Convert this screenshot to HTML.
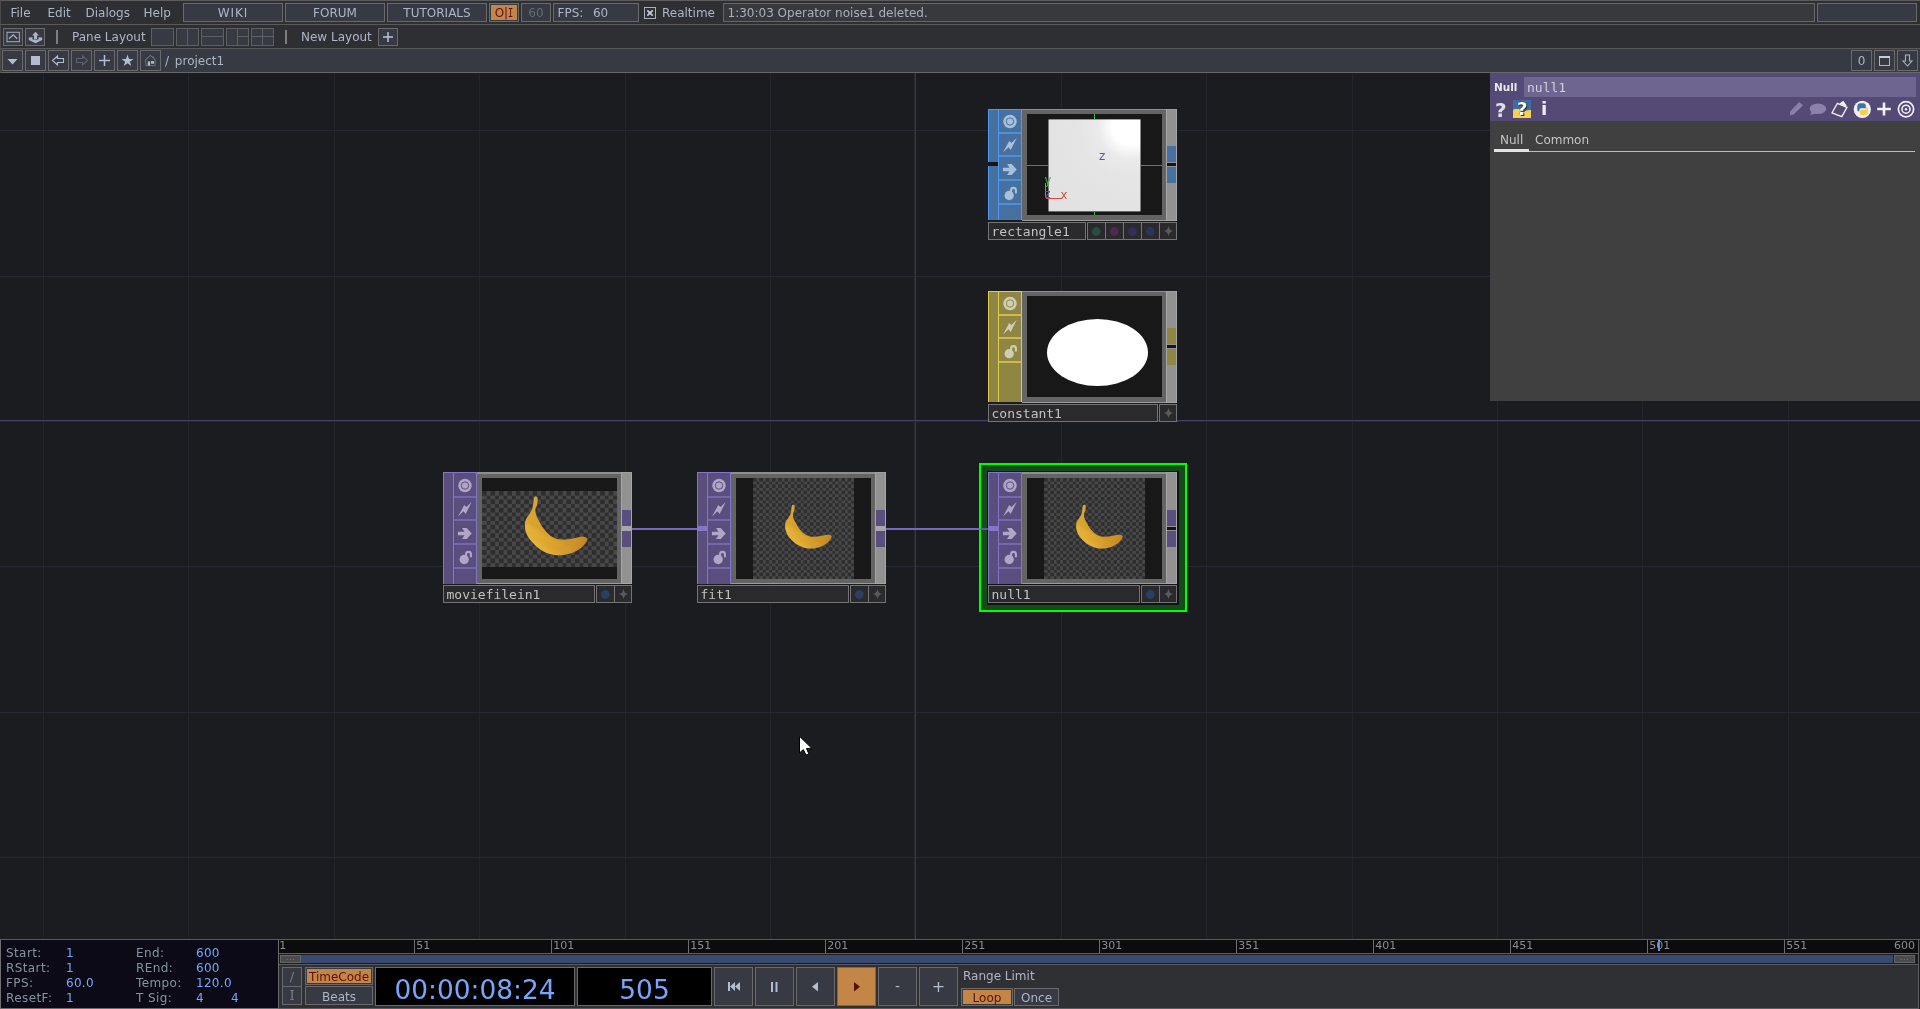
<!DOCTYPE html>
<html lang="en">
<head>
<meta charset="utf-8">
<title>TouchDesigner - project1</title>
<style>
*{box-sizing:border-box;margin:0;padding:0}
html,body{width:1920px;height:1009px;overflow:hidden;background:#1b1c20}
body{position:relative;font-family:"DejaVu Sans","Liberation Sans",sans-serif;font-size:12px;color:#adb5c6;line-height:1}
#app{position:absolute;left:0;top:0;width:1920px;height:1009px;overflow:hidden;will-change:transform}
#app div,#app span,#app svg,#app i,#app b{position:absolute}
.t{white-space:nowrap;line-height:14px;height:14px}
/* ---------- top bars ---------- */
#row1{left:0;top:0;width:1920px;height:25px;background:#2e2f32;border-top:1px solid #5c5c5e;border-bottom:1px solid #5a5a5c;border-left:1px solid #4a4a4c}
#row2{left:0;top:25px;width:1920px;height:24px;background:#2e2f32;border-bottom:1px solid #5a5a5c;border-left:1px solid #4a4a4c}
#row3{left:0;top:49px;width:1920px;height:24px;background:#373943;border-bottom:1px solid #66676b;border-left:1px solid #4a4a4c}
.btn{border:1px solid #6a6a6c;background:#373943}
.lay{border:1px solid #5f6064;background:#373943}
.tb{text-align:center;line-height:18px;white-space:nowrap}
/* ---------- network ---------- */
#net{left:0;top:73px;width:1920px;height:866px;background:#1b1c20;overflow:hidden}
.gv{top:0;width:1px;height:866px;background:#23242c}
.gh{left:0;height:1px;width:1920px;background:#262834}

.node{width:189px;height:131px;--f:#5a4e7e;--b:#8475c8;--s:#7568aa;--i:#b0a6c8}
.node .in{left:0;top:0;width:11px;height:112px;background:var(--f);border:1px solid var(--b);border-right:0;border-bottom:0}
.node .fl{left:10px;top:0;width:24px;height:112px;background:var(--f);border-left:1px solid var(--b);border-right:1px solid var(--b);border-top:1px solid var(--b)}
.node .fl i{left:0;width:22px;height:2px;background:var(--s)}
.node .fl svg{left:0;top:0}
.node .fr{left:34px;top:0;width:144px;height:112px;background:#646464;border-top:2px solid #8e8e8e;border-bottom:1px solid #9a9a9a}
.node .vw{left:5px;top:4px;width:135px;height:101px;background:#181819;overflow:hidden}
.node .ou{left:178px;top:0;width:11px;height:112px;background:#929292;border-left:1px solid #a6a6a6;border-right:1px solid #a6a6a6;border-top:1px solid #a0a0a0;border-bottom:1px solid #a6a6a6}
.node .ou i{left:0;width:9px;background:var(--f)}
.node .lb{top:113px;height:18px;background:#2a2a2c;border:1px solid #747476}
.node .nm{left:2.5px;top:1px;font-family:"DejaVu Sans Mono","Liberation Mono",monospace;font-size:13px;line-height:15px;color:#c2c2c2;white-space:nowrap}
.node.c1 .fr{border-top-width:1px}
.node.c1 .fl{height:111px}.node.c1 .fl svg{top:-1px}.node.c1 .fl i{margin-top:-1px}
.node.c1 .in{height:111px}.node.c1 .in i{margin-top:-1px}
.node.c1 .ou i{margin-top:-1px}
.chk{background-color:#2e2e2e;background-image:conic-gradient(#484848 25%,#2e2e2e 0 50%,#484848 0 75%,#2e2e2e 0);background-size:8.44px 8.44px}

/* ---------- param panel ---------- */
#par{left:1490px;top:73px;width:430px;height:328px;background:#404040}
#parh{left:0;top:0;width:430px;height:48px;background:#544a75}
/* ---------- bottom ---------- */
#bot{left:0;top:939px;width:1920px;height:70px;background:#2f3033;border-top:1px solid #5a5a5c}
</style>
</head>
<body>
<div id="app">

<!-- ================= NETWORK ================= -->
<div id="net">
  <i class="gv" style="left:43px"></i><i class="gv" style="left:188px"></i><i class="gv" style="left:334px"></i><i class="gv" style="left:479px"></i><i class="gv" style="left:625px"></i><i class="gv" style="left:770px"></i><i class="gv" style="left:1061px"></i><i class="gv" style="left:1206px"></i><i class="gv" style="left:1352px"></i><i class="gv" style="left:1497px"></i><i class="gv" style="left:1642px"></i><i class="gv" style="left:1788px"></i><i class="gh" style="top:57px"></i><i class="gh" style="top:203px"></i><i class="gh" style="top:493px"></i><i class="gh" style="top:639px"></i><i class="gh" style="top:784px"></i><i class="gv" style="left:915px;background:#363658"></i><i class="gv" style="left:914px;background:#27272f"></i><i class="gh" style="top:347px;background:#3f3f69"></i><i class="gh" style="top:348px;background:#262838"></i>
  <i style="left:632px;top:454.5px;width:65px;height:2px;background:#7767c0"></i><i style="left:886px;top:454.5px;width:102px;height:2px;background:#7767c0"></i>
  <svg width="0" height="0" style="left:0;top:0"><defs>
    <linearGradient id="bg" gradientUnits="userSpaceOnUse" x1="43" y1="40" x2="105" y2="66"><stop offset="0" stop-color="#e8b83e"/><stop offset="0.5" stop-color="#dca42c"/><stop offset="0.85" stop-color="#cf9430"/><stop offset="1" stop-color="#b27a2a"/></linearGradient>
    <linearGradient id="bg2" gradientUnits="userSpaceOnUse" x1="60" y1="52" x2="52" y2="66"><stop offset="0" stop-color="#c8901f" stop-opacity="0.45"/><stop offset="0.45" stop-color="#e0ac34" stop-opacity="0"/><stop offset="1" stop-color="#f0c850" stop-opacity="0.35"/></linearGradient>
  </defs></svg>
  <div class="node c1" style="left:988px;top:36px;--f:#4670a0;--b:#4f9af0;--s:#4f90d8;--i:#a9c0dc"><div class="in"><i style="left:-1px;top:53px;width:11px;height:4px;background:#151518"></i></div><div class="fl"><i style="top:23.4px"></i><i style="top:46.0px"></i><i style="top:70.0px"></i><i style="top:94.2px"></i><svg width="22" height="111" viewBox="0 0 22 111"><circle cx="11" cy="12.5" r="6.7" fill="var(--i)"/><circle cx="11" cy="12.5" r="3.7" fill="none" stroke="var(--f)" stroke-width="1"/><path d="M17.7 29.0 L12.4 34.0 L10.2 32.1 L4.0 43.5 L9.5 38.3 L11.7 40.9 Z" fill="var(--i)"/><path d="M3.9 58.7 L10.5 58.7 L8.0 55.0 L12.7 55.0 L17.7 60.4 L12.7 65.9 L8.0 65.9 L10.5 62.2 L3.9 62.2 Z" fill="var(--i)"/><circle cx="10.2" cy="86.5" r="4.65" fill="var(--i)"/><path d="M12.1 82.5 V81.3 A2.4 2.4 0 0 1 16.9 81.3 V83.5" fill="none" stroke="var(--i)" stroke-width="2.1" stroke-linecap="round"/></svg></div><div class="fr"><div class="vw"><div style="left:21px;top:5px;width:92px;height:92px;transform:translate(.5px,.4px);background:radial-gradient(circle 117px at 90% 7%,#fff 0,#fff 16%,#f5f5f5 22%,#eaeaea 29%,#e5e5e5 45%,#e1e1e1 100%)"></div>
<i style="left:0;top:50.5px;width:21px;height:1px;background:#d04848"></i><i style="left:114px;top:50.5px;width:21px;height:1px;background:#d04848"></i>
<i style="left:67px;top:0;width:1px;height:5px;background:#48b848"></i><i style="left:67px;top:98px;width:1px;height:3px;background:#48b848"></i>
<i style="left:18px;top:69px;width:1px;height:15px;background:#48b848"></i><i style="left:18.5px;top:83.5px;width:16px;height:1px;background:#d04848"></i>
<span style="left:72px;top:36px;font-size:12px;line-height:13px;color:#5a52c8">z</span>
<span style="left:17.5px;top:60px;font-size:11.5px;line-height:12px;color:#48b848">y</span>
<span style="left:17.5px;top:74px;font-size:11.5px;line-height:12px;color:#5a52c8">z</span>
<span style="left:33.5px;top:74.5px;font-size:11.5px;line-height:12px;color:#d04848">x</span></div></div><div class="ou"><i style="top:37px;height:16px"></i><i style="top:58px;height:16px"></i><i style="top:54px;height:3px;background:#151518"></i></div><div class="lb" style="left:0;width:98px"><span class="nm">rectangle1</span></div><div class="lb" style="left:99px;width:19px"><svg width="17" height="16" viewBox="0 0 17 16" style="left:0;top:0"><circle cx="8.3" cy="8.5" r="4.4" fill="#274e40"/></svg></div><div class="lb" style="left:117px;width:19px"><svg width="17" height="16" viewBox="0 0 17 16" style="left:0;top:0"><circle cx="8.3" cy="8.5" r="4.4" fill="#4e2a4e"/></svg></div><div class="lb" style="left:135px;width:19px"><svg width="17" height="16" viewBox="0 0 17 16" style="left:0;top:0"><circle cx="8.3" cy="8.5" r="4.4" fill="#332e5a"/></svg></div><div class="lb" style="left:153px;width:19px"><svg width="17" height="16" viewBox="0 0 17 16" style="left:0;top:0"><circle cx="8.3" cy="8.5" r="4.4" fill="#283658"/></svg></div><div class="lb" style="left:171px;width:18px"><svg width="17" height="16" viewBox="0 0 17 16" style="left:0;top:0"><path d="M8.5 2.5 Q9 7.5 13.5 8 Q9 8.5 8.5 13.5 Q8 8.5 3.5 8 Q8 7.5 8.5 2.5Z" fill="#5a5a5c"/></svg></div></div>
  <div class="node c1" style="left:988px;top:218px;--f:#8f8644;--b:#e2cc4e;--s:#cdb94c;--i:#cfcdb4"><div class="in"></div><div class="fl"><i style="top:23.4px"></i><i style="top:46.0px"></i><i style="top:70.0px"></i><svg width="22" height="111" viewBox="0 0 22 111"><circle cx="11" cy="12.5" r="6.7" fill="var(--i)"/><circle cx="11" cy="12.5" r="3.7" fill="none" stroke="var(--f)" stroke-width="1"/><path d="M17.7 29.0 L12.4 34.0 L10.2 32.1 L4.0 43.5 L9.5 38.3 L11.7 40.9 Z" fill="var(--i)"/><circle cx="10.2" cy="62.7" r="4.65" fill="var(--i)"/><path d="M12.1 58.7 V57.5 A2.4 2.4 0 0 1 16.9 57.5 V59.7" fill="none" stroke="var(--i)" stroke-width="2.1" stroke-linecap="round"/></svg></div><div class="fr"><div class="vw"><div style="left:19.5px;top:23px;width:101px;height:67px;border-radius:50%;background:#fff"></div></div></div><div class="ou"><i style="top:37px;height:16px"></i><i style="top:58px;height:16px"></i><i style="top:54px;height:3px;background:#151518"></i></div><div class="lb" style="left:0;width:170px"><span class="nm">constant1</span></div><div class="lb" style="left:171px;width:18px"><svg width="17" height="16" viewBox="0 0 17 16" style="left:0;top:0"><path d="M8.5 2.5 Q9 7.5 13.5 8 Q9 8.5 8.5 13.5 Q8 8.5 3.5 8 Q8 7.5 8.5 2.5Z" fill="#5a5a5c"/></svg></div></div>
  <div class="node" style="left:443px;top:399px"><div class="in"></div><div class="fl"><i style="top:23.4px"></i><i style="top:46.0px"></i><i style="top:70.0px"></i><i style="top:94.2px"></i><svg width="22" height="111" viewBox="0 0 22 111"><circle cx="11" cy="12.5" r="6.7" fill="var(--i)"/><circle cx="11" cy="12.5" r="3.7" fill="none" stroke="var(--f)" stroke-width="1"/><path d="M17.7 29.0 L12.4 34.0 L10.2 32.1 L4.0 43.5 L9.5 38.3 L11.7 40.9 Z" fill="var(--i)"/><path d="M3.9 58.7 L10.5 58.7 L8.0 55.0 L12.7 55.0 L17.7 60.4 L12.7 65.9 L8.0 65.9 L10.5 62.2 L3.9 62.2 Z" fill="var(--i)"/><circle cx="10.2" cy="86.5" r="4.65" fill="var(--i)"/><path d="M12.1 82.5 V81.3 A2.4 2.4 0 0 1 16.9 81.3 V83.5" fill="none" stroke="var(--i)" stroke-width="2.1" stroke-linecap="round"/></svg></div><div class="fr"><div class="vw"><div class="chk" style="left:0;top:12.5px;width:135px;height:76px"></div><svg width="135" height="101" viewBox="0 0 135 101" style="left:0;top:0"><g><path d="M52.3 19.5C51.7 20.7 51.6 24.3 51.2 26.3C50.8 28.2 50.8 29.6 50.1 31.3C49.5 32.9 48.3 34.6 47.3 36.3C46.3 37.9 44.8 39.6 44.1 41.3C43.3 42.9 43.1 44.5 43.0 46.3C42.9 48.0 42.9 49.9 43.3 52.0C43.8 54.0 44.6 56.2 45.8 58.4C47.1 60.5 48.8 62.7 50.8 64.8C52.9 67.0 55.4 69.5 58.0 71.2C60.6 73.0 63.6 74.5 66.5 75.5C69.5 76.5 72.8 77.1 75.8 77.3C78.8 77.5 81.6 77.1 84.4 76.6C87.1 76.1 89.9 75.2 92.2 74.1C94.6 73.0 96.8 71.6 98.7 70.2C100.5 68.7 102.2 66.9 103.3 65.5C104.4 64.2 104.9 62.9 105.1 62.0C105.3 61.0 105.2 60.4 104.4 59.8C103.5 59.3 101.8 58.7 100.1 58.7C98.4 58.7 96.5 59.4 94.4 59.8C92.2 60.2 89.7 60.9 87.2 61.2C84.7 61.5 81.8 61.8 79.4 61.6C77.0 61.4 75.1 61.1 73.0 60.2C70.8 59.3 68.4 57.9 66.5 56.2C64.6 54.6 63.1 52.7 61.5 50.5C60.0 48.4 58.5 45.7 57.3 43.4C56.0 41.1 54.7 39.0 54.1 37.0C53.4 35.0 53.2 33.1 53.3 31.3C53.5 29.5 54.8 28.1 55.1 26.3C55.5 24.5 55.6 21.8 55.5 20.6C55.4 19.3 54.9 19.0 54.4 18.8C53.9 18.6 52.8 18.2 52.3 19.5Z" fill="url(#bg)"/><path d="M52.3 19.5C51.7 20.7 51.6 24.3 51.2 26.3C50.8 28.2 50.8 29.6 50.1 31.3C49.5 32.9 48.3 34.6 47.3 36.3C46.3 37.9 44.8 39.6 44.1 41.3C43.3 42.9 43.1 44.5 43.0 46.3C42.9 48.0 42.9 49.9 43.3 52.0C43.8 54.0 44.6 56.2 45.8 58.4C47.1 60.5 48.8 62.7 50.8 64.8C52.9 67.0 55.4 69.5 58.0 71.2C60.6 73.0 63.6 74.5 66.5 75.5C69.5 76.5 72.8 77.1 75.8 77.3C78.8 77.5 81.6 77.1 84.4 76.6C87.1 76.1 89.9 75.2 92.2 74.1C94.6 73.0 96.8 71.6 98.7 70.2C100.5 68.7 102.2 66.9 103.3 65.5C104.4 64.2 104.9 62.9 105.1 62.0C105.3 61.0 105.2 60.4 104.4 59.8C103.5 59.3 101.8 58.7 100.1 58.7C98.4 58.7 96.5 59.4 94.4 59.8C92.2 60.2 89.7 60.9 87.2 61.2C84.7 61.5 81.8 61.8 79.4 61.6C77.0 61.4 75.1 61.1 73.0 60.2C70.8 59.3 68.4 57.9 66.5 56.2C64.6 54.6 63.1 52.7 61.5 50.5C60.0 48.4 58.5 45.7 57.3 43.4C56.0 41.1 54.7 39.0 54.1 37.0C53.4 35.0 53.2 33.1 53.3 31.3C53.5 29.5 54.8 28.1 55.1 26.3C55.5 24.5 55.6 21.8 55.5 20.6C55.4 19.3 54.9 19.0 54.4 18.8C53.9 18.6 52.8 18.2 52.3 19.5Z" fill="url(#bg2)"/></g></svg></div></div><div class="ou"><i style="top:37px;height:16px"></i><i style="top:58px;height:16px"></i><i style="top:53px;height:5px;background:#a8a8aa"></i></div><div class="lb" style="left:0;width:152px"><span class="nm">moviefilein1</span></div><div class="lb" style="left:153px;width:19px"><svg width="17" height="16" viewBox="0 0 17 16" style="left:0;top:0"><circle cx="8.3" cy="8.5" r="4.4" fill="#2c3e62"/></svg></div><div class="lb" style="left:171px;width:18px"><svg width="17" height="16" viewBox="0 0 17 16" style="left:0;top:0"><path d="M8.5 2.5 Q9 7.5 13.5 8 Q9 8.5 8.5 13.5 Q8 8.5 3.5 8 Q8 7.5 8.5 2.5Z" fill="#5a5a5c"/></svg></div></div>
  <div class="node" style="left:697px;top:399px"><div class="in"><i style="left:0;top:53px;width:10px;height:5px;background:var(--b)"></i></div><div class="fl"><i style="top:23.4px"></i><i style="top:46.0px"></i><i style="top:70.0px"></i><i style="top:94.2px"></i><svg width="22" height="111" viewBox="0 0 22 111"><circle cx="11" cy="12.5" r="6.7" fill="var(--i)"/><circle cx="11" cy="12.5" r="3.7" fill="none" stroke="var(--f)" stroke-width="1"/><path d="M17.7 29.0 L12.4 34.0 L10.2 32.1 L4.0 43.5 L9.5 38.3 L11.7 40.9 Z" fill="var(--i)"/><path d="M3.9 58.7 L10.5 58.7 L8.0 55.0 L12.7 55.0 L17.7 60.4 L12.7 65.9 L8.0 65.9 L10.5 62.2 L3.9 62.2 Z" fill="var(--i)"/><circle cx="10.2" cy="86.5" r="4.65" fill="var(--i)"/><path d="M12.1 82.5 V81.3 A2.4 2.4 0 0 1 16.9 81.3 V83.5" fill="none" stroke="var(--i)" stroke-width="2.1" stroke-linecap="round"/></svg></div><div class="fr"><div class="vw"><div class="chk" style="left:17px;top:0;width:101px;height:101px;background-size:6.3125px 6.3125px"></div><svg width="135" height="101" viewBox="0 0 135 101" style="left:0;top:0"><g transform="translate(67.5 50.5) scale(0.748) translate(-67.5 -50.5)"><path d="M52.3 19.5C51.7 20.7 51.6 24.3 51.2 26.3C50.8 28.2 50.8 29.6 50.1 31.3C49.5 32.9 48.3 34.6 47.3 36.3C46.3 37.9 44.8 39.6 44.1 41.3C43.3 42.9 43.1 44.5 43.0 46.3C42.9 48.0 42.9 49.9 43.3 52.0C43.8 54.0 44.6 56.2 45.8 58.4C47.1 60.5 48.8 62.7 50.8 64.8C52.9 67.0 55.4 69.5 58.0 71.2C60.6 73.0 63.6 74.5 66.5 75.5C69.5 76.5 72.8 77.1 75.8 77.3C78.8 77.5 81.6 77.1 84.4 76.6C87.1 76.1 89.9 75.2 92.2 74.1C94.6 73.0 96.8 71.6 98.7 70.2C100.5 68.7 102.2 66.9 103.3 65.5C104.4 64.2 104.9 62.9 105.1 62.0C105.3 61.0 105.2 60.4 104.4 59.8C103.5 59.3 101.8 58.7 100.1 58.7C98.4 58.7 96.5 59.4 94.4 59.8C92.2 60.2 89.7 60.9 87.2 61.2C84.7 61.5 81.8 61.8 79.4 61.6C77.0 61.4 75.1 61.1 73.0 60.2C70.8 59.3 68.4 57.9 66.5 56.2C64.6 54.6 63.1 52.7 61.5 50.5C60.0 48.4 58.5 45.7 57.3 43.4C56.0 41.1 54.7 39.0 54.1 37.0C53.4 35.0 53.2 33.1 53.3 31.3C53.5 29.5 54.8 28.1 55.1 26.3C55.5 24.5 55.6 21.8 55.5 20.6C55.4 19.3 54.9 19.0 54.4 18.8C53.9 18.6 52.8 18.2 52.3 19.5Z" fill="url(#bg)"/><path d="M52.3 19.5C51.7 20.7 51.6 24.3 51.2 26.3C50.8 28.2 50.8 29.6 50.1 31.3C49.5 32.9 48.3 34.6 47.3 36.3C46.3 37.9 44.8 39.6 44.1 41.3C43.3 42.9 43.1 44.5 43.0 46.3C42.9 48.0 42.9 49.9 43.3 52.0C43.8 54.0 44.6 56.2 45.8 58.4C47.1 60.5 48.8 62.7 50.8 64.8C52.9 67.0 55.4 69.5 58.0 71.2C60.6 73.0 63.6 74.5 66.5 75.5C69.5 76.5 72.8 77.1 75.8 77.3C78.8 77.5 81.6 77.1 84.4 76.6C87.1 76.1 89.9 75.2 92.2 74.1C94.6 73.0 96.8 71.6 98.7 70.2C100.5 68.7 102.2 66.9 103.3 65.5C104.4 64.2 104.9 62.9 105.1 62.0C105.3 61.0 105.2 60.4 104.4 59.8C103.5 59.3 101.8 58.7 100.1 58.7C98.4 58.7 96.5 59.4 94.4 59.8C92.2 60.2 89.7 60.9 87.2 61.2C84.7 61.5 81.8 61.8 79.4 61.6C77.0 61.4 75.1 61.1 73.0 60.2C70.8 59.3 68.4 57.9 66.5 56.2C64.6 54.6 63.1 52.7 61.5 50.5C60.0 48.4 58.5 45.7 57.3 43.4C56.0 41.1 54.7 39.0 54.1 37.0C53.4 35.0 53.2 33.1 53.3 31.3C53.5 29.5 54.8 28.1 55.1 26.3C55.5 24.5 55.6 21.8 55.5 20.6C55.4 19.3 54.9 19.0 54.4 18.8C53.9 18.6 52.8 18.2 52.3 19.5Z" fill="url(#bg2)"/></g></svg></div></div><div class="ou"><i style="top:37px;height:16px"></i><i style="top:58px;height:16px"></i><i style="top:53px;height:5px;background:#a8a8aa"></i></div><div class="lb" style="left:0;width:152px"><span class="nm">fit1</span></div><div class="lb" style="left:153px;width:19px"><svg width="17" height="16" viewBox="0 0 17 16" style="left:0;top:0"><circle cx="8.3" cy="8.5" r="4.4" fill="#2c3e62"/></svg></div><div class="lb" style="left:171px;width:18px"><svg width="17" height="16" viewBox="0 0 17 16" style="left:0;top:0"><path d="M8.5 2.5 Q9 7.5 13.5 8 Q9 8.5 8.5 13.5 Q8 8.5 3.5 8 Q8 7.5 8.5 2.5Z" fill="#5a5a5c"/></svg></div></div>
  <div style="left:979px;top:390px;width:208px;height:149px;background:#154a1b;border:2px solid #00ff00"><i style="left:6px;top:6px;width:192px;height:134px;background:#121214"></i></div>
  <i style="left:979px;top:454.5px;width:9px;height:2px;background:#7767c0;opacity:.75"></i>
  <div class="node" style="left:988px;top:399px"><div class="in"><i style="left:0;top:53px;width:10px;height:5px;background:var(--b)"></i></div><div class="fl"><i style="top:23.4px"></i><i style="top:46.0px"></i><i style="top:70.0px"></i><i style="top:94.2px"></i><svg width="22" height="111" viewBox="0 0 22 111"><circle cx="11" cy="12.5" r="6.7" fill="var(--i)"/><circle cx="11" cy="12.5" r="3.7" fill="none" stroke="var(--f)" stroke-width="1"/><path d="M17.7 29.0 L12.4 34.0 L10.2 32.1 L4.0 43.5 L9.5 38.3 L11.7 40.9 Z" fill="var(--i)"/><path d="M3.9 58.7 L10.5 58.7 L8.0 55.0 L12.7 55.0 L17.7 60.4 L12.7 65.9 L8.0 65.9 L10.5 62.2 L3.9 62.2 Z" fill="var(--i)"/><circle cx="10.2" cy="86.5" r="4.65" fill="var(--i)"/><path d="M12.1 82.5 V81.3 A2.4 2.4 0 0 1 16.9 81.3 V83.5" fill="none" stroke="var(--i)" stroke-width="2.1" stroke-linecap="round"/></svg></div><div class="fr"><div class="vw"><div class="chk" style="left:17px;top:0;width:101px;height:101px;background-size:6.3125px 6.3125px"></div><svg width="135" height="101" viewBox="0 0 135 101" style="left:0;top:0"><g transform="translate(67.5 50.5) scale(0.748) translate(-67.5 -50.5)"><path d="M52.3 19.5C51.7 20.7 51.6 24.3 51.2 26.3C50.8 28.2 50.8 29.6 50.1 31.3C49.5 32.9 48.3 34.6 47.3 36.3C46.3 37.9 44.8 39.6 44.1 41.3C43.3 42.9 43.1 44.5 43.0 46.3C42.9 48.0 42.9 49.9 43.3 52.0C43.8 54.0 44.6 56.2 45.8 58.4C47.1 60.5 48.8 62.7 50.8 64.8C52.9 67.0 55.4 69.5 58.0 71.2C60.6 73.0 63.6 74.5 66.5 75.5C69.5 76.5 72.8 77.1 75.8 77.3C78.8 77.5 81.6 77.1 84.4 76.6C87.1 76.1 89.9 75.2 92.2 74.1C94.6 73.0 96.8 71.6 98.7 70.2C100.5 68.7 102.2 66.9 103.3 65.5C104.4 64.2 104.9 62.9 105.1 62.0C105.3 61.0 105.2 60.4 104.4 59.8C103.5 59.3 101.8 58.7 100.1 58.7C98.4 58.7 96.5 59.4 94.4 59.8C92.2 60.2 89.7 60.9 87.2 61.2C84.7 61.5 81.8 61.8 79.4 61.6C77.0 61.4 75.1 61.1 73.0 60.2C70.8 59.3 68.4 57.9 66.5 56.2C64.6 54.6 63.1 52.7 61.5 50.5C60.0 48.4 58.5 45.7 57.3 43.4C56.0 41.1 54.7 39.0 54.1 37.0C53.4 35.0 53.2 33.1 53.3 31.3C53.5 29.5 54.8 28.1 55.1 26.3C55.5 24.5 55.6 21.8 55.5 20.6C55.4 19.3 54.9 19.0 54.4 18.8C53.9 18.6 52.8 18.2 52.3 19.5Z" fill="url(#bg)"/><path d="M52.3 19.5C51.7 20.7 51.6 24.3 51.2 26.3C50.8 28.2 50.8 29.6 50.1 31.3C49.5 32.9 48.3 34.6 47.3 36.3C46.3 37.9 44.8 39.6 44.1 41.3C43.3 42.9 43.1 44.5 43.0 46.3C42.9 48.0 42.9 49.9 43.3 52.0C43.8 54.0 44.6 56.2 45.8 58.4C47.1 60.5 48.8 62.7 50.8 64.8C52.9 67.0 55.4 69.5 58.0 71.2C60.6 73.0 63.6 74.5 66.5 75.5C69.5 76.5 72.8 77.1 75.8 77.3C78.8 77.5 81.6 77.1 84.4 76.6C87.1 76.1 89.9 75.2 92.2 74.1C94.6 73.0 96.8 71.6 98.7 70.2C100.5 68.7 102.2 66.9 103.3 65.5C104.4 64.2 104.9 62.9 105.1 62.0C105.3 61.0 105.2 60.4 104.4 59.8C103.5 59.3 101.8 58.7 100.1 58.7C98.4 58.7 96.5 59.4 94.4 59.8C92.2 60.2 89.7 60.9 87.2 61.2C84.7 61.5 81.8 61.8 79.4 61.6C77.0 61.4 75.1 61.1 73.0 60.2C70.8 59.3 68.4 57.9 66.5 56.2C64.6 54.6 63.1 52.7 61.5 50.5C60.0 48.4 58.5 45.7 57.3 43.4C56.0 41.1 54.7 39.0 54.1 37.0C53.4 35.0 53.2 33.1 53.3 31.3C53.5 29.5 54.8 28.1 55.1 26.3C55.5 24.5 55.6 21.8 55.5 20.6C55.4 19.3 54.9 19.0 54.4 18.8C53.9 18.6 52.8 18.2 52.3 19.5Z" fill="url(#bg2)"/></g></svg></div></div><div class="ou"><i style="top:37px;height:16px"></i><i style="top:58px;height:16px"></i><i style="top:54px;height:3px;background:#151518"></i></div><div class="lb" style="left:0;width:152px"><span class="nm">null1</span></div><div class="lb" style="left:153px;width:19px"><svg width="17" height="16" viewBox="0 0 17 16" style="left:0;top:0"><circle cx="8.3" cy="8.5" r="4.4" fill="#2c3e62"/></svg></div><div class="lb" style="left:171px;width:18px"><svg width="17" height="16" viewBox="0 0 17 16" style="left:0;top:0"><path d="M8.5 2.5 Q9 7.5 13.5 8 Q9 8.5 8.5 13.5 Q8 8.5 3.5 8 Q8 7.5 8.5 2.5Z" fill="#5a5a5c"/></svg></div></div>
</div>

<!-- ================= TOP BARS ================= -->
<div id="row1">

  <span class="t" style="left:9.5px;top:5px">File</span>
  <span class="t" style="left:46.5px;top:5px">Edit</span>
  <span class="t" style="left:84.5px;top:5px">Dialogs</span>
  <span class="t" style="left:142.5px;top:5px">Help</span>
  <div class="btn tb" style="left:182px;top:2px;width:100px;height:19px;letter-spacing:.9px">WIKI</div>
  <div class="btn tb" style="left:284px;top:2px;width:100px;height:19px">FORUM</div>
  <div class="btn tb" style="left:386px;top:2px;width:100px;height:19px">TUTORIALS</div>
  <div class="btn" style="left:488px;top:2px;width:30px;height:19px"><div class="tb" style="left:1px;top:1px;width:26px;height:15px;background:#c48647;color:#5a1010;line-height:17px">O|<span style="position:static;display:inline-block;transform:scaleX(.72);margin:0 -1px;font-family:'DejaVu Sans Mono','Liberation Mono',monospace;font-size:12px">I</span></div></div>
  <div class="btn tb" style="left:520px;top:2px;width:30px;height:19px;color:#686a72">60</div>
  <div class="btn" style="left:552px;top:2px;width:86px;height:19px"><span class="t" style="left:3.5px;top:2px;white-space:pre;word-spacing:1px">FPS:  60</span></div>
  <div style="left:643px;top:6px;width:12px;height:12px;border:1px solid #a9b0bd;background:#2e2f32"><svg width="10" height="10" viewBox="0 0 10 10" style="left:0;top:0"><path d="M2.3 2.3 L7.7 7.7 M7.7 2.3 L2.3 7.7" stroke="#c4cbd8" stroke-width="1.8" fill="none"/></svg></div>
  <span class="t" style="left:661px;top:5px">Realtime</span>
  <div style="left:722px;top:2px;width:1092px;height:19px;border:1px solid #66676a;background:#38393d"><span class="t" style="left:3.5px;top:2px;color:#a9afbc">1:30:03 Operator noise1 deleted.</span></div>
  <div class="btn" style="left:1816px;top:2px;width:100px;height:19px"></div>
</div>
<div id="row2">

  <div class="btn" style="left:2px;top:3px;width:20px;height:18px"><svg width="19" height="17" viewBox="0 0 19 17" style="left:0;top:0"><rect x="3" y="3.3" width="12.4" height="9.4" fill="none" stroke="#9aa4b7" stroke-width="1.1"/><path d="M5 9.8 L9.2 5.8 L13.2 9.8" fill="none" stroke="#a9b3c6" stroke-width="1.3"/></svg></div>
  <div class="btn" style="left:24px;top:3px;width:20px;height:18px"><svg width="19" height="17" viewBox="0 0 19 17" style="left:0;top:0"><path d="M9.5 2.7 L13 6.5 L11 6.5 L11 10 L8 10 L8 6.5 L6 6.5 Z" fill="#a9b3c6"/><path d="M2.8 8.6 L6.5 8.2 L6.5 10.6 L12.5 10.6 L12.5 8.2 L16.2 8.6 L16.2 11 L9.5 14.2 L2.8 11 Z" fill="#a9b3c6"/></svg></div>
  <i style="left:55px;top:5px;width:2px;height:14px;background:#7d7e82"></i>
  <span class="t" style="left:71px;top:5px">Pane Layout</span>
  <div class="lay" style="left:150px;top:3px;width:23px;height:18px"></div>
  <div class="lay" style="left:175px;top:3px;width:23px;height:18px"><i style="left:10px;top:0;width:1px;height:16px;background:#5f6064"></i></div>
  <div class="lay" style="left:200px;top:3px;width:23px;height:18px"><i style="left:0;top:7px;width:21px;height:1px;background:#5f6064"></i></div>
  <div class="lay" style="left:225px;top:3px;width:23px;height:18px"><i style="left:10px;top:0;width:1px;height:16px;background:#5f6064"></i><i style="left:10px;top:7px;width:11px;height:1px;background:#5f6064"></i></div>
  <div class="lay" style="left:250px;top:3px;width:23px;height:18px"><i style="left:10px;top:0;width:1px;height:16px;background:#5f6064"></i><i style="left:0;top:7px;width:21px;height:1px;background:#5f6064"></i></div>

  <i style="left:284px;top:5px;width:2px;height:14px;background:#7d7e82"></i>
  <span class="t" style="left:300px;top:5px">New Layout</span>
  <div class="btn" style="left:377px;top:3px;width:20px;height:18px"><svg width="18" height="16" viewBox="0 0 18 16" style="left:0;top:0"><path d="M9 3 V13 M4 8 H14" stroke="#c0c8d6" stroke-width="1.4" fill="none"/></svg></div>
</div>
<div id="row3">

  <div class="btn" style="left:1px;top:1px;width:21px;height:21px"><svg width="19" height="19" viewBox="0 0 19 19" style="left:0;top:0"><path d="M4.5 8 L14.5 8 L9.5 13.5 Z" fill="#b3bdd0"/></svg></div>
  <div class="btn" style="left:24px;top:1px;width:21px;height:21px"><svg width="19" height="19" viewBox="0 0 19 19" style="left:0;top:0"><rect x="5" y="5" width="9" height="9" fill="#b3bdd0"/></svg></div>
  <div class="btn" style="left:47px;top:1px;width:21px;height:21px"><svg width="19" height="19" viewBox="0 0 19 19" style="left:0;top:0"><path d="M3.5 9.5 L8.5 5 L8.5 7.5 L14.5 7.5 L14.5 11.5 L8.5 11.5 L8.5 14 Z" fill="none" stroke="#b3bdd0" stroke-width="1.1"/></svg></div>
  <div class="btn" style="left:70px;top:1px;width:21px;height:21px"><svg width="19" height="19" viewBox="0 0 19 19" style="left:0;top:0"><path d="M15.5 9.5 L10.5 5 L10.5 7.5 L4.5 7.5 L4.5 11.5 L10.5 11.5 L10.5 14 Z" fill="none" stroke="#5f6270" stroke-width="1.1"/></svg></div>
  <div class="btn" style="left:93px;top:1px;width:21px;height:21px"><svg width="19" height="19" viewBox="0 0 19 19" style="left:0;top:0"><path d="M9.5 4 V15 M4 9.5 H15" stroke="#b3bdd0" stroke-width="1.5" fill="none"/></svg></div>
  <div class="btn" style="left:116px;top:1px;width:21px;height:21px"><svg width="19" height="19" viewBox="0 0 19 19" style="left:0;top:0"><path d="M9.5 3.5 L11 8 L15.5 8 L11.9 10.7 L13.3 15 L9.5 12.3 L5.7 15 L7.1 10.7 L3.5 8 L8 8 Z" fill="#b3bdd0"/></svg></div>
  <div class="btn" style="left:139px;top:1px;width:21px;height:21px"><svg width="19" height="19" viewBox="0 0 19 19" style="left:0;top:0"><path d="M3.7 9.7 L9.45 4.3 L15.1 9.7" fill="none" stroke="#7f8696" stroke-width="1"/><path d="M11.6 5.2 V6.4 L12.8 7.4 V5.2Z" fill="#6f7586"/><path d="M4.8 9.5 V14.6 H14.2 V9.5" fill="none" stroke="#6f7586" stroke-width="0.9"/><rect x="6.8" y="10.4" width="2.2" height="4.2" fill="#b3bdd0"/><rect x="9.9" y="10.1" width="3.2" height="2.6" fill="#b3bdd0"/></svg></div>
  <span class="t" style="left:164px;top:5px;word-spacing:2px">/ project1</span>
  <div class="btn tb" style="left:1850px;top:1px;width:21px;height:21px;line-height:21px">0</div>
  <div class="btn" style="left:1873px;top:1px;width:21px;height:21px"><svg width="19" height="19" viewBox="0 0 19 19" style="left:0;top:0"><rect x="4.5" y="5.5" width="10" height="9" fill="none" stroke="#a9b3c6" stroke-width="1"/><rect x="4" y="5" width="11" height="2" fill="#c6cedd"/></svg></div>
  <div class="btn" style="left:1896px;top:1px;width:21px;height:21px"><svg width="19" height="19" viewBox="0 0 19 19" style="left:0;top:0"><path d="M7.5 4 H11.5 V10 H14 L9.5 15 L5 10 H7.5 Z" fill="none" stroke="#a9b3c6" stroke-width="1.1"/></svg></div>
</div>

<!-- ================= PARAMETER PANEL ================= -->
<div id="par">
  <div id="parh">

    <span style="left:4px;top:8px;font-weight:bold;font-size:10.5px;line-height:12px;color:#e9e9e9;white-space:nowrap">Null</span>
    <div style="left:34px;top:4px;width:392px;height:20px;background:#6e6590"><span style="left:3px;top:3px;font-family:'DejaVu Sans Mono','Liberation Mono',monospace;font-size:13px;line-height:15px;color:#d2d0d8;white-space:nowrap">null1</span></div>
    <span style="left:5px;top:25.5px;font-weight:bold;font-size:20px;line-height:22px;color:#e0dee6">?</span>
    <div style="left:23px;top:27px;width:18px;height:18px;background:#3b6ea5;overflow:hidden"><div style="left:-3px;top:9px;width:15px;height:16px;border-radius:6px 6px 0 0;background:#f7d04e"></div><div style="left:9px;top:10px;width:14px;height:12px;border-radius:7px 3px 0 0;background:#f7d04e"></div><span style="left:4px;top:-1px;font-weight:bold;font-size:18px;line-height:20px;color:#fff;text-shadow:0 0 1px #222,0 0 1px #222,1px 1px 0 #333">?</span></div>
    <span style="left:51px;top:25px;font-weight:bold;font-size:18.5px;line-height:22px;color:#eceaf0">i</span>
    <svg width="130" height="22" viewBox="0 0 130 22" style="left:298px;top:25px">
      <!-- pencil -->
      <path d="M11.2 4.1 L14.9 7.4 L5.3 16.8 L2 17.2 L2.2 13.5 Z" fill="#8b81aa"/>
      <path d="M4 14.6 L12.6 5.6" stroke="#7c719c" stroke-width="0.7"/>
      <!-- chat -->
      <ellipse cx="29.9" cy="10.8" rx="8.3" ry="5.2" fill="#8b81aa"/><path d="M24 13 L22 17.2 L28 15.3 Z" fill="#8b81aa"/>
      <!-- clipboard -->
      <path d="M49.4 5.4 L59 9.3 L53.8 18.6 L44 14.8 Z" fill="none" stroke="#f4f4f6" stroke-width="1.3"/><path d="M51.5 5.6 L55.3 2.8 L58.6 7.6 L57.8 9 Z" fill="#f4f4f6"/>
      <!-- python -->
      <circle cx="74.3" cy="11.3" r="8.6" fill="#f2f2f4"/>
      <g transform="translate(0.3 0.3)"><path d="M69 11.5 V8 Q69 5 72 5 H75 Q77.5 5 77.5 7.5 V10 H72.5 Q71 10 71 12 V13 H69.8 Q69 13 69 11.5 Z" fill="#3b72a8"/>
      <path d="M79.5 10 V13.5 Q79.5 17 76.5 17 H73.5 Q71.5 17 71.5 15 V13 Q71.5 11.5 73 11.5 H77 Q78 11.5 78 10 V9 H79 Q79.5 9 79.5 10 Z" fill="#f7d04e"/></g>
      <!-- plus -->
      <path d="M96 4.5 V17.5 M89.2 11 H102.8" stroke="#f2f2f4" stroke-width="2.6" fill="none"/>
      <!-- target -->
      <circle cx="118" cy="11.2" r="7.6" fill="none" stroke="#f2f2f4" stroke-width="1.7"/><circle cx="118" cy="11.2" r="4" fill="none" stroke="#f2f2f4" stroke-width="1.6"/><circle cx="118" cy="11.2" r="1.2" fill="#f2f2f4"/>
    </svg>
  </div>

  <span class="t" style="left:10px;top:60px;color:#c4c4c4">Null</span>
  <span class="t" style="left:45px;top:60px;color:#c4c4c4">Common</span>
  <i style="left:4px;top:78px;width:421px;height:1px;background:#bebebe"></i>
  <i style="left:4px;top:76px;width:35px;height:3px;background:#e4e4e4"></i>
</div>

<!-- ================= BOTTOM ================= -->
<div id="bot">
  <div id="info" style="left:0;top:0;width:279px;height:69px;background:#0b0a16;border-left:1px solid #707074;border-right:1px solid #6a6a6e;border-bottom:1px solid #6a6a6e">
    <span class="t" style="left:5px;top:6px;color:#8793a0;letter-spacing:.4px">Start:</span><span class="t" style="left:65px;top:6px;color:#78a5fa;letter-spacing:.3px">1</span><span class="t" style="left:135px;top:6px;color:#8793a0;letter-spacing:.4px">End:</span><span class="t" style="left:195px;top:6px;color:#78a5fa;letter-spacing:.3px">600</span>
    <span class="t" style="left:5px;top:21px;color:#8793a0;letter-spacing:.4px">RStart:</span><span class="t" style="left:65px;top:21px;color:#78a5fa;letter-spacing:.3px">1</span><span class="t" style="left:135px;top:21px;color:#8793a0;letter-spacing:.4px">REnd:</span><span class="t" style="left:195px;top:21px;color:#78a5fa;letter-spacing:.3px">600</span>
    <span class="t" style="left:5px;top:36px;color:#8793a0;letter-spacing:.4px">FPS:</span><span class="t" style="left:65px;top:36px;color:#78a5fa;letter-spacing:.3px">60.0</span><span class="t" style="left:135px;top:36px;color:#8793a0;letter-spacing:.4px">Tempo:</span><span class="t" style="left:195px;top:36px;color:#78a5fa;letter-spacing:.3px">120.0</span>
    <span class="t" style="left:5px;top:51px;color:#8793a0;letter-spacing:.4px">ResetF:</span><span class="t" style="left:65px;top:51px;color:#78a5fa;letter-spacing:.3px">1</span><span class="t" style="left:135px;top:51px;color:#8793a0;letter-spacing:.4px">T Sig:</span><span class="t" style="left:195px;top:51px;color:#78a5fa;letter-spacing:.3px">4</span><span class="t" style="left:230px;top:51px;color:#78a5fa">4</span>
  </div>
  <div id="ruler" style="left:279px;top:0;width:1639px;height:13px;background:#0c0c0d;overflow:hidden">
<span class="t" style="left:0.2px;top:-1px;font-size:11px;color:#898c93">1</span>
    <i style="left:135.4px;top:0;width:1px;height:13px;background:#6e6e72"></i><span class="t" style="left:137.2px;top:-1px;font-size:11px;color:#898c93">51</span>
    <i style="left:272.4px;top:0;width:1px;height:13px;background:#6e6e72"></i><span class="t" style="left:274.2px;top:-1px;font-size:11px;color:#898c93">101</span>
    <i style="left:409.4px;top:0;width:1px;height:13px;background:#6e6e72"></i><span class="t" style="left:411.2px;top:-1px;font-size:11px;color:#898c93">151</span>
    <i style="left:546.4px;top:0;width:1px;height:13px;background:#6e6e72"></i><span class="t" style="left:548.2px;top:-1px;font-size:11px;color:#898c93">201</span>
    <i style="left:683.4px;top:0;width:1px;height:13px;background:#6e6e72"></i><span class="t" style="left:685.2px;top:-1px;font-size:11px;color:#898c93">251</span>
    <i style="left:820.4px;top:0;width:1px;height:13px;background:#6e6e72"></i><span class="t" style="left:822.2px;top:-1px;font-size:11px;color:#898c93">301</span>
    <i style="left:957.4px;top:0;width:1px;height:13px;background:#6e6e72"></i><span class="t" style="left:959.2px;top:-1px;font-size:11px;color:#898c93">351</span>
    <i style="left:1094.4px;top:0;width:1px;height:13px;background:#6e6e72"></i><span class="t" style="left:1096.2px;top:-1px;font-size:11px;color:#898c93">401</span>
    <i style="left:1231.4px;top:0;width:1px;height:13px;background:#6e6e72"></i><span class="t" style="left:1233.2px;top:-1px;font-size:11px;color:#898c93">451</span>
    <i style="left:1368.4px;top:0;width:1px;height:13px;background:#6e6e72"></i><span class="t" style="left:1370.2px;top:-1px;font-size:11px;color:#898c93">501</span>
    <i style="left:1505.4px;top:0;width:1px;height:13px;background:#6e6e72"></i><span class="t" style="left:1507.2px;top:-1px;font-size:11px;color:#898c93">551</span>
    <span class="t" style="right:3px;top:-1px;font-size:11px;color:#898c93">600</span>
    <i style="left:1379px;top:0;width:2px;height:11px;background:#6e8ad8"></i>
  </div>
  <i style="left:279px;top:13px;width:1639px;height:1px;background:#5c5c60"></i>
  <div style="left:279px;top:14px;width:1639px;height:10px;background:#1c1c20">
    <i style="left:1px;top:1px;width:21px;height:8px;background:#4b4b4d;border:1px solid #66666a"></i>
    <i style="left:22px;top:1px;width:1592px;height:8px;background:#394a70"></i>
    <i style="left:1615px;top:1px;width:21px;height:8px;background:#4b4b4d;border:1px solid #66666a"></i>
    <span style="left:7px;top:-1px;font-size:8px;line-height:10px;color:#7a7a7e;letter-spacing:0.5px">...</span>
    <span style="left:1621px;top:-1px;font-size:8px;line-height:10px;color:#7a7a7e;letter-spacing:0.5px">...</span>
  </div>
  <i style="left:279px;top:24px;width:1639px;height:1px;background:#5c5c60"></i>
  <i style="left:1918px;top:0;width:1px;height:69px;background:#5c5c60"></i>
  <i style="left:1919px;top:0;width:1px;height:69px;background:#1c1c20"></i>
  <i style="left:279px;top:68px;width:1639px;height:1px;background:#5c5c60"></i>
  <div style="left:282px;top:27px;width:20px;height:38px;border:1px solid #6a6a6e;background:#373943"><i style="left:0;top:18px;width:18px;height:1px;background:#6a6a6e"></i>
    <span style="left:0;top:1px;width:18px;text-align:center;font-size:13px;line-height:16px;color:#7c7e88">/</span>
    <span style="left:0;top:20px;width:18px;text-align:center;font-family:'DejaVu Serif','Liberation Serif',serif;font-size:13px;line-height:16px;color:#7c7e88">I</span></div>
  <div style="left:305px;top:27px;width:68px;height:18px;border:1px solid #6a6a6e;background:#373943"><div class="tb" style="left:1px;top:1px;width:64px;height:14px;background:#c48647;color:#5a1010;line-height:16px">TimeCode</div></div>
  <div class="tb" style="left:305px;top:46px;width:68px;height:19px;border:1px solid #6a6a6e;background:#373943;line-height:20px">Beats</div>
  <div style="left:375px;top:27px;width:200px;height:39px;border:1px solid #6a6a6e;background:#000;text-align:center;font-size:26.4px;line-height:43px;color:#78a5fa;white-space:nowrap">00:00:08:24</div>
  <div style="left:577px;top:27px;width:135px;height:39px;border:1px solid #6a6a6e;background:#000;text-align:center;font-size:26.4px;line-height:43px;color:#78a5fa;white-space:nowrap">505</div>
  <div style="left:714px;top:27px;width:39px;height:39px;border:1px solid #6a6a6e;background:#373943"><svg width="37" height="37" viewBox="0 0 37 37" style="left:0;top:0"><rect x="13" y="14" width="2" height="9" fill="#b3bdd0"/><path d="M20 14 V23 L15 18.5 Z M25 14 V23 L20 18.5 Z" fill="#b3bdd0"/></svg></div>
  <div style="left:755px;top:27px;width:39px;height:39px;border:1px solid #6a6a6e;background:#373943"><svg width="37" height="37" viewBox="0 0 37 37" style="left:0;top:0"><rect x="15" y="14" width="2" height="10" fill="#b3bdd0"/><rect x="19.5" y="14" width="2" height="10" fill="#b3bdd0"/></svg></div>
  <div style="left:796px;top:27px;width:39px;height:39px;border:1px solid #6a6a6e;background:#373943"><svg width="37" height="37" viewBox="0 0 37 37" style="left:0;top:0"><path d="M21 14 V23.5 L15 18.7 Z" fill="#b3bdd0"/></svg></div>
  <div style="left:837px;top:27px;width:39px;height:39px;border:1px solid #6a6a6e;background:#c48647"><svg width="37" height="37" viewBox="0 0 37 37" style="left:0;top:0"><path d="M16 14 V23.5 L22 18.7 Z" fill="#5a1010"/></svg></div>
  <div style="left:878px;top:27px;width:39px;height:39px;border:1px solid #6a6a6e;background:#373943;text-align:center;font-size:14px;line-height:36px;color:#b3bdd0">-</div>
  <div style="left:919px;top:27px;width:39px;height:39px;border:1px solid #6a6a6e;background:#373943;text-align:center;font-size:16px;line-height:37px;color:#b3bdd0">+</div>
  <span class="t" style="left:963px;top:29px">Range Limit</span>
  <div style="left:961px;top:48px;width:52px;height:18px;border:1px solid #6a6a6e;background:#373943"><div class="tb" style="left:1px;top:1px;width:48px;height:14px;background:#c48647;color:#5a1010;line-height:16px">Loop</div></div>
  <div class="tb" style="left:1014px;top:48px;width:45px;height:18px;border:1px solid #6a6a6e;background:#373943;line-height:18px">Once</div>
</div>

<svg width="20" height="26" viewBox="0 0 20 26" style="left:795px;top:732px"><path d="M4.5 4.3 L4.5 21 L8.3 17.6 L11 23 L13.9 21.9 L11.5 16.6 L16.6 16.1 Z" fill="#fff" stroke="#000" stroke-width="1" stroke-linejoin="miter"/></svg>
</div>
</body>
</html>
